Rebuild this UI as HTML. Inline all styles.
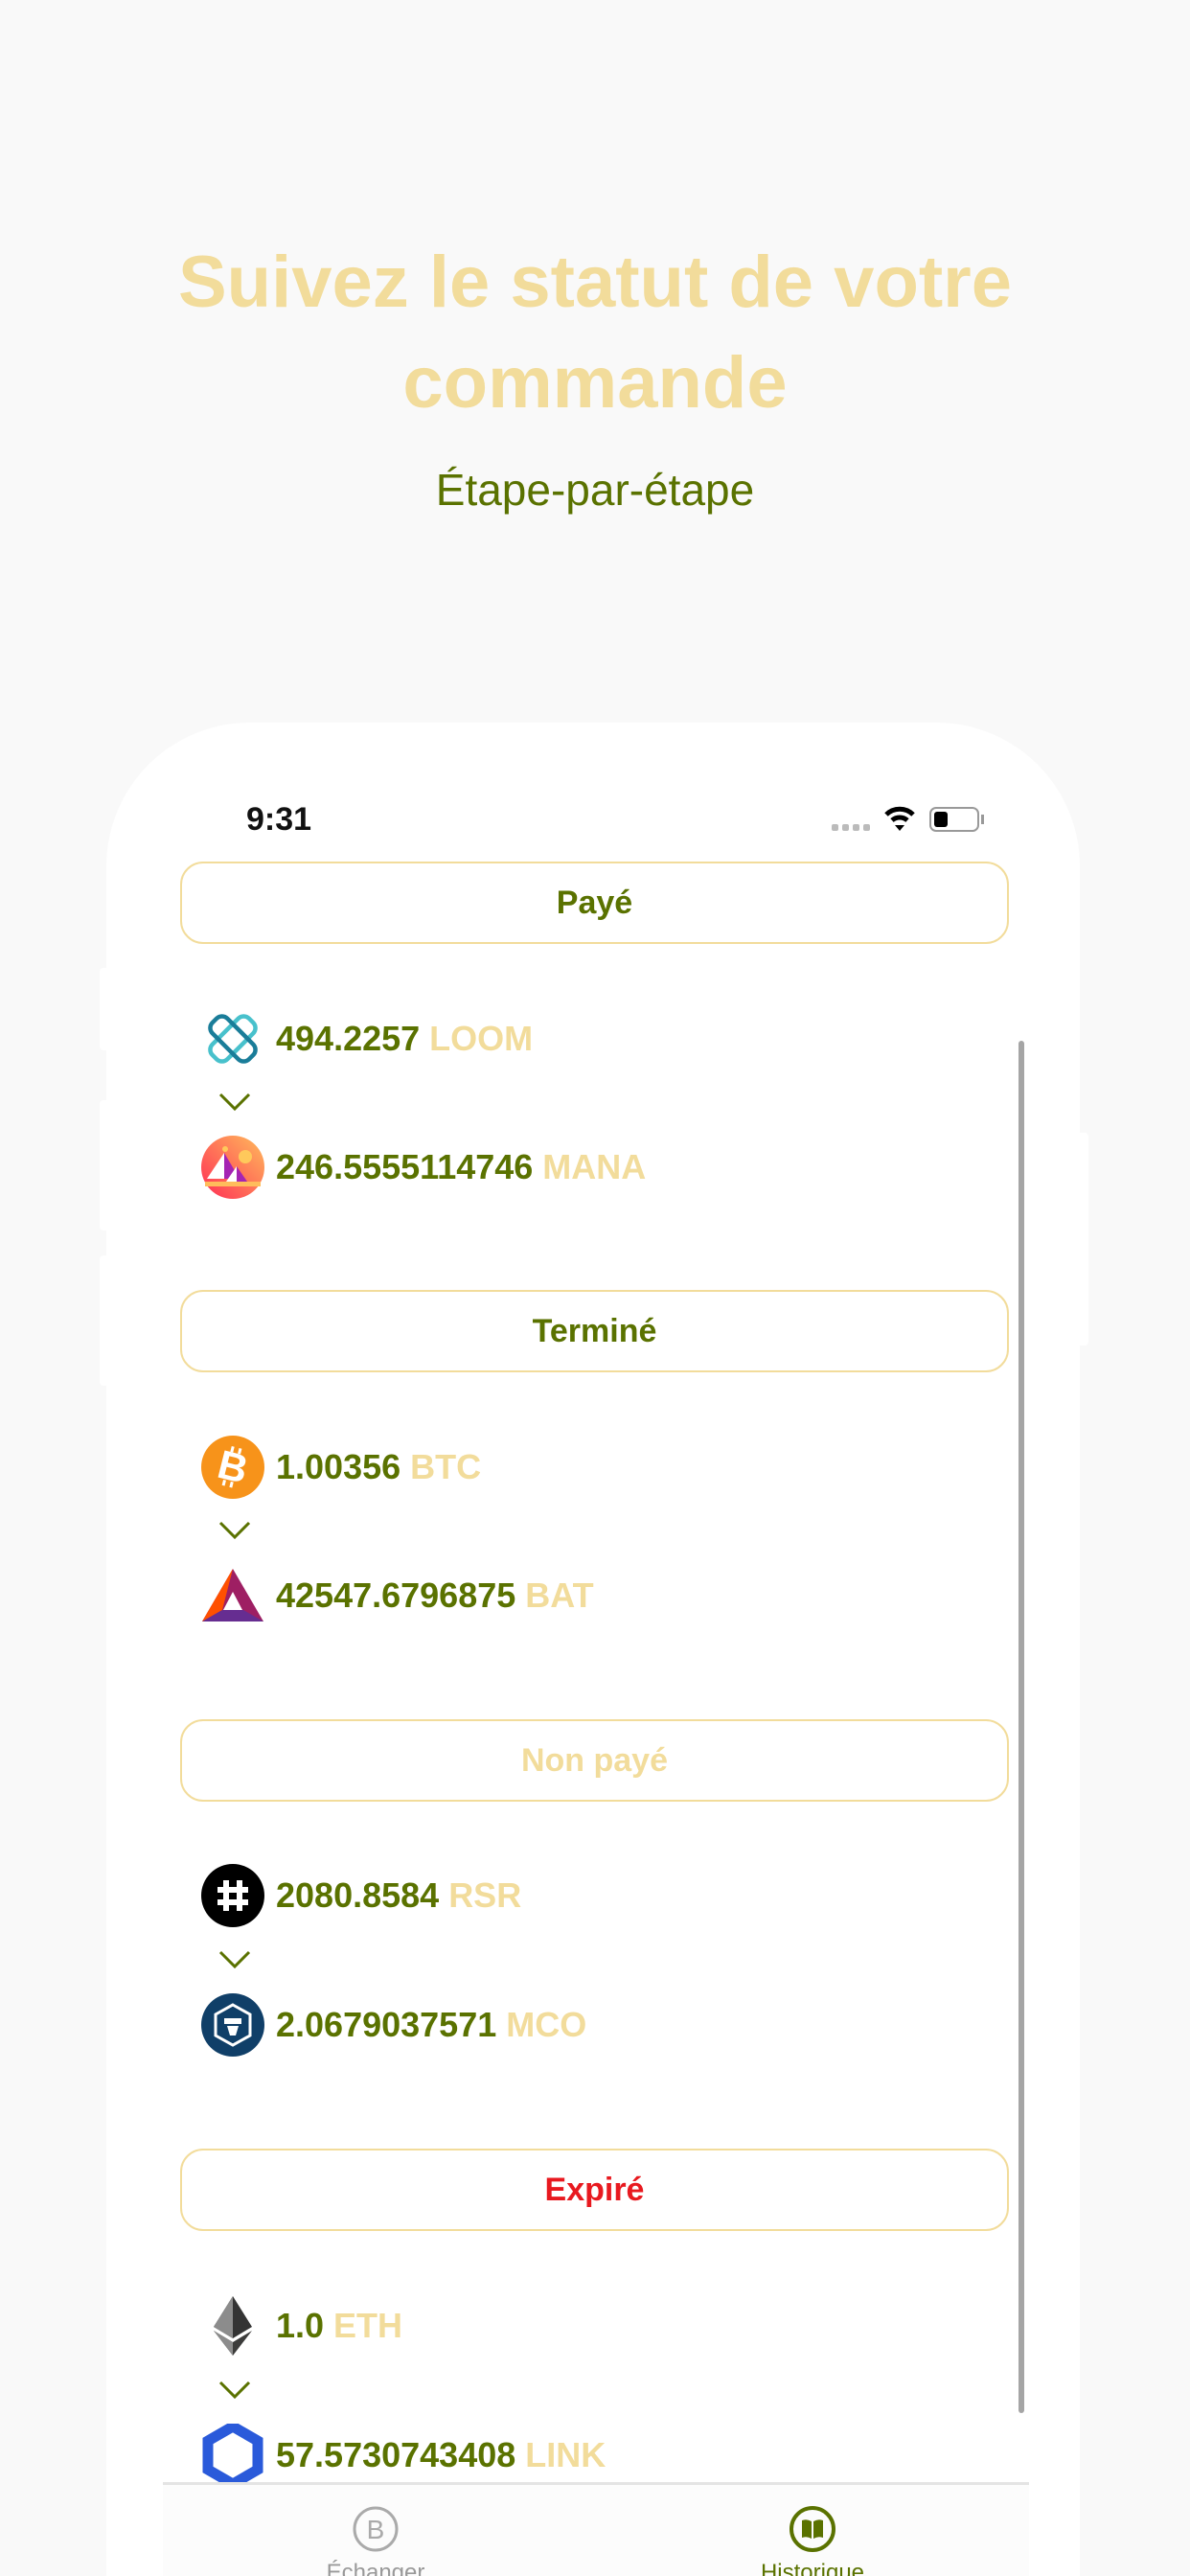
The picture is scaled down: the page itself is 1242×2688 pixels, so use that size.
<!DOCTYPE html>
<html><head><meta charset="utf-8"><style>
*{margin:0;padding:0;box-sizing:border-box}
html{width:1242px;height:2688px;overflow:hidden}
body{width:1242px;height:2688px;background:#f9f9f9;font-family:"Liberation Sans",Arial,sans-serif;position:relative;overflow:hidden}
.title{position:absolute;left:0;width:1242px;top:242px;text-align:center;color:#f2dc9b;font-weight:bold;font-size:76px;line-height:105px}
.sub{position:absolute;left:0;width:1242px;top:484px;text-align:center;color:#5a7200;font-size:46px}
.phone{position:absolute;left:111px;top:754px;width:1016px;height:1934px;background:#fff;border-radius:150px 150px 0 0}
.btn{position:absolute;left:188px;width:865px;height:86px;border:2px solid #f2dc9b;border-radius:24px;text-align:center;line-height:82px;font-weight:bold;font-size:34px;color:#5a7200;background:#fff}
.row{position:absolute;left:210px;height:66px;display:flex;align-items:center}
.row svg{width:66px;height:66px;flex:none}
.row span{margin-left:12px;font-weight:bold;font-size:36px;color:#5a7200;white-space:nowrap}
.row span b{color:#f2dc9b}
.chev{position:absolute;left:228px;width:34px;height:20px}
.tab{position:absolute;left:170px;top:2590px;width:904px;height:98px;background:#fcfcfc;border-top:3px solid #e4e4e4;overflow:hidden}
.side{position:absolute;background:#fff;border-radius:4px}
</style></head><body>
<div class="title">Suivez le statut de votre<br>commande</div>
<div class="sub">Étape-par-étape</div>
<div class="side" style="left:104px;top:1010px;width:12px;height:86px"></div>
<div class="side" style="left:104px;top:1148px;width:12px;height:136px"></div>
<div class="side" style="left:104px;top:1310px;width:12px;height:136px"></div>
<div class="side" style="left:1122px;top:1182px;width:14px;height:222px"></div>
<div class="phone"></div>
<div style="position:absolute;left:257px;top:836px;font-size:34px;font-weight:bold;color:#111">9:31</div>
<div style="position:absolute;left:868px;top:860px;display:flex;gap:4px"><i style="width:7px;height:7px;background:#bbb;border-radius:2px"></i><i style="width:7px;height:7px;background:#bbb;border-radius:2px"></i><i style="width:7px;height:7px;background:#bbb;border-radius:2px"></i><i style="width:7px;height:7px;background:#bbb;border-radius:2px"></i></div>
<svg style="position:absolute;left:922px;top:840px" width="34" height="28" viewBox="0 0 34 28"><path d="M3 10 A20 20 0 0 1 31 10" stroke="#000" stroke-width="5" fill="none"/><path d="M9 16 A12 12 0 0 1 25 16" stroke="#000" stroke-width="5" fill="none"/><path d="M12 21 L17 27 L22 21 Z" fill="#000"/></svg>
<div style="position:absolute;left:970px;top:842px;width:52px;height:26px;border:2px solid #999;border-radius:7px"><div style="position:absolute;left:3px;top:3px;width:14px;height:16px;background:#000;border-radius:3px"></div></div>
<div style="position:absolute;left:1024px;top:850px;width:3px;height:10px;background:#999"></div>

<div class="btn" style="top:899px">Payé</div>
<div class="btn" style="top:1346px">Terminé</div>
<div class="btn" style="top:1794px;color:#f2dc9b">Non payé</div>
<div class="btn" style="top:2242px;color:#e8191f">Expiré</div>

<div class="row" style="top:1051px"><svg viewBox="0 0 66 66"><g fill="none" stroke-width="4.5"><rect x="22" y="6" width="22" height="54" rx="8" transform="rotate(45 33 33)" stroke="#48c1cc"/><rect x="22" y="6" width="22" height="54" rx="8" transform="rotate(-45 33 33)" stroke="#1a7d99"/></g></svg><span>494.2257 <b>LOOM</b></span></div>
<svg class="chev" style="top:1140px" viewBox="0 0 34 20"><path d="M2 2 L17 17 L32 2" stroke="#5a7200" stroke-width="3" fill="none"/></svg>
<div class="row" style="top:1185px"><svg viewBox="0 0 66 66"><defs><linearGradient id="m" x1="0" y1="1" x2="1" y2="0"><stop offset="0" stop-color="#ff2d55"/><stop offset="1" stop-color="#ffbc5b"/></linearGradient></defs><circle cx="33" cy="33" r="33" fill="url(#m)"/><circle cx="46" cy="22" r="7" fill="#ffc95b"/><circle cx="25" cy="14" r="3" fill="#ffc95b"/><path d="M24 18 L24 45 L6 45 Z" fill="#fff"/><path d="M24 18 L40 45 L24 45Z" fill="#a524b3"/><path d="M37 32 L37 48 L26 48Z" fill="#fff"/><path d="M37 32 L48 48 L37 48Z" fill="#a524b3"/><rect x="4" y="48" width="58" height="5" fill="#ffbc5b"/></svg><span>246.5555114746 <b>MANA</b></span></div>

<div class="row" style="top:1498px"><svg viewBox="0 0 66 66"><circle cx="33" cy="33" r="33" fill="#f7931a"/><text x="33" y="47" font-size="42" font-weight="bold" fill="#fff" text-anchor="middle" font-family="Liberation Sans" transform="rotate(14 33 33)">B</text><path d="M28 12v6M36 12v6M28 48v6M36 48v6" stroke="#fff" stroke-width="3" transform="rotate(14 33 33)"/></svg><span>1.00356 <b>BTC</b></span></div>
<svg class="chev" style="top:1587px" viewBox="0 0 34 20"><path d="M2 2 L17 17 L32 2" stroke="#5a7200" stroke-width="3" fill="none"/></svg>
<div class="row" style="top:1632px"><svg viewBox="0 0 66 66"><path d="M33 5 L65 60 L1 60Z" fill="#9e1f63"/><path d="M33 5 L1 60 L22 48Z" fill="#ff5000"/><path d="M1 60 L65 60 L44 48 L22 48Z" fill="#662d91"/><path d="M33 29 L43 48 L23 48Z" fill="#fff"/></svg><span>42547.6796875 <b>BAT</b></span></div>

<div class="row" style="top:1945px"><svg viewBox="0 0 66 66"><circle cx="33" cy="33" r="33" fill="#000"/><path d="M26 17v32M40 17v32M17 27h32M17 40h32" stroke="#fff" stroke-width="6"/></svg><span>2080.8584 <b>RSR</b></span></div>
<svg class="chev" style="top:2035px" viewBox="0 0 34 20"><path d="M2 2 L17 17 L32 2" stroke="#5a7200" stroke-width="3" fill="none"/></svg>
<div class="row" style="top:2080px"><svg viewBox="0 0 66 66"><circle cx="33" cy="33" r="33" fill="#103f68"/><path d="M33 12 L51 22 L51 44 L33 54 L15 44 L15 22Z" fill="none" stroke="#fff" stroke-width="3"/><path d="M24 26h18v6h-18z M27 34h12l-3 10h-6z" fill="#fff"/></svg><span>2.0679037571 <b>MCO</b></span></div>

<div class="row" style="top:2394px"><svg viewBox="0 0 66 66"><path d="M33 2 L53 34 L33 46 L13 34Z" fill="#343434"/><path d="M33 2 L33 46 L13 34Z" fill="#8c8c8c"/><path d="M33 50 L53 38 L33 64 L13 38Z" fill="#3c3c3b"/><path d="M33 50 L33 64 L13 38Z" fill="#8c8c8c"/></svg><span>1.0 <b>ETH</b></span></div>
<svg class="chev" style="top:2484px" viewBox="0 0 34 20"><path d="M2 2 L17 17 L32 2" stroke="#5a7200" stroke-width="3" fill="none"/></svg>
<div class="row" style="top:2529px"><svg viewBox="0 0 66 66"><path d="M33 3 L59 18 L59 48 L33 63 L7 48 L7 18Z" fill="none" stroke="#2a5ada" stroke-width="11"/></svg><span>57.5730743408 <b>LINK</b></span></div>

<div style="position:absolute;left:1063px;top:1086px;width:6px;height:1432px;background:#a5a5a5;border-radius:3px"></div>

<div class="tab">
<svg style="position:absolute;left:198px;top:22px" width="48" height="48" viewBox="0 0 48 48"><circle cx="24" cy="24" r="22" fill="none" stroke="#aaa" stroke-width="3"/><text x="24" y="34" font-size="28" fill="#aaa" text-anchor="middle" font-family="Liberation Sans">B</text></svg>
<svg style="position:absolute;left:654px;top:22px" width="48" height="48" viewBox="0 0 48 48"><circle cx="24" cy="24" r="22" fill="none" stroke="#5a7200" stroke-width="4"/><path d="M13 15 Q18 13 23 16 V34 Q18 31 13 33Z M25 16 Q30 13 35 15 V33 Q30 31 25 34Z" fill="#5a7200"/></svg>
<div style="position:absolute;left:122px;width:200px;top:78px;text-align:center;font-size:24px;line-height:28px;color:#999">Échanger</div>
<div style="position:absolute;left:578px;width:200px;top:78px;text-align:center;font-size:24px;line-height:28px;color:#5a7200">Historique</div>
</div>
</body></html>
